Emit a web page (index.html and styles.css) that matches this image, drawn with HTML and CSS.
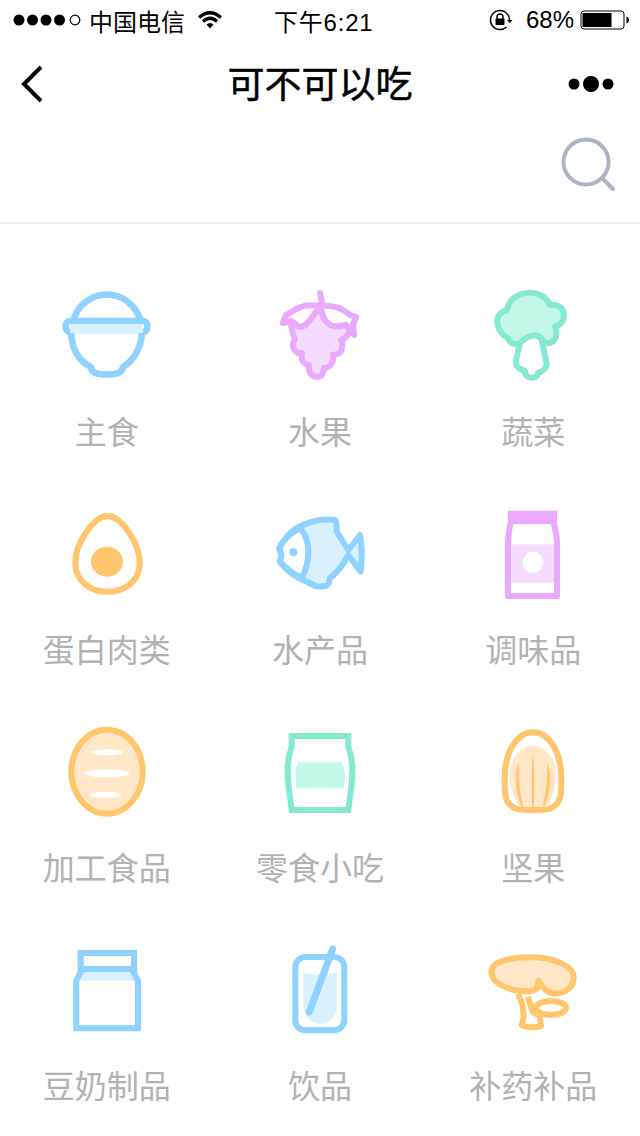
FILE: index.html
```html
<!DOCTYPE html>
<html lang="zh">
<head>
    <meta charset="UTF-8">
    <meta name="viewport" content="width=device-width, initial-scale=1.0">
    <title>可不可以吃</title>
    <link rel="stylesheet" href="styles.css">
</head>
<body>
    <div class="status-bar">
        <div class="status-left">
            <svg class="signal" width="70" height="14" viewBox="0 0 70 14">
                <circle cx="6" cy="7" r="5.5"/>
                <circle cx="19.5" cy="7" r="5.5"/>
                <circle cx="33" cy="7" r="5.5"/>
                <circle cx="46.500" cy="7" r="5.500"/>
                <circle class="signal-empty" cx="62" cy="7" r="4.800"/>
            </svg>
            <span class="carrier">中国电信</span>
            <svg class="wifi" width="24" height="18" viewBox="0 0 24 18">
                <path d="M1 6.500Q12 -3 23 6.500" fill="none" stroke="#000" stroke-width="3.200"/>
                <path d="M5 10.500Q12 4 19 10.500" fill="none" stroke="#000" stroke-width="3.200"/>
                <path d="M8.500 13.500Q12 10.500 15.500 13.500L12 17.500Z"/>
            </svg>
        </div>
        <span class="time">下午6:21</span>
        <div class="status-right">
            <svg class="lock" width="24" height="22" viewBox="0 0 24 22">
                <path d="M20.500 11A9.500 9.500 0 1 0 17.500 18" fill="none" stroke="#000" stroke-width="1.500"/>
                <path d="M18 11H23.500L20.800 14Z"/>
                <path d="M8 10V8A3 3 0 0 1 14 8V10" fill="none" stroke="#000" stroke-width="1.500"/>
                <rect x="6.500" y="9.500" width="9" height="6.500" rx="1"/>
            </svg>
            <span class="battery-text">68%</span>
            <svg class="battery" width="50" height="20" viewBox="0 0 50 20">
                <rect x="1" y="1" width="43" height="18" rx="3" fill="none" stroke="#000" stroke-width="1"/>
                <rect x="2.500" y="3" width="29" height="14"/>
                <path d="M46.500 6.500C48.500 7 49 8.500 49 10C49 11.500 48.500 13 46.500 13.500Z"/>
            </svg>
        </div>
    </div>

    <div class="nav-bar">
        <svg class="back" width="28" height="40" viewBox="0 0 28 40">
            <path d="M22 3L5 20L22 37" fill="none" stroke="#000" stroke-width="4"/>
        </svg>
        <h1 class="title">可不可以吃</h1>
        <svg class="more" width="48" height="18" viewBox="0 0 48 18">
            <circle cx="6" cy="9" r="5.500"/>
            <circle cx="23" cy="9" r="8"/>
            <circle cx="40" cy="9" r="5.500"/>
        </svg>
    </div>

    <div class="search-row">
        <svg width="58" height="58" viewBox="0 0 58 58">
            <circle cx="26" cy="26" r="22.500" fill="none" stroke="#adb5c4" stroke-width="4"/>
            <path d="M42 42L53 53" fill="none" stroke="#adb5c4" stroke-width="4" stroke-linecap="round"/>
        </svg>
    </div>

    <div class="grid">
        <div class="item">
            <svg class="icon blue thick" viewBox="0 0 100 100">
                <rect class="tint" x="12" y="42" width="74" height="9" stroke="none"/>
                <path class="open" d="M16 38C21 21 35 11.500 50 11.500C65 11.500 78 21 84 38"/>
                <path class="open" d="M13 38H86C92 38 92 49 86 49M13 38C7 38 7 49 13 49"/>
                <path class="open" d="M14 50C15 66 22 78 34 84C34 90 40 91.500 50 91.500C60 91.500 65 90 66 84C76 78 84 66 85 50"/>
            </svg>
            <span class="label">主食</span>
        </div>
        <div class="item">
            <svg class="icon purple" viewBox="0 0 100 100">
                <path class="tint" d="M21 42Q22 50 25 56Q21 63 25 68Q29 71 32 70Q30 78 36 81L39 82Q38 92 46 94Q53 95 54 85Q60 85 62 80Q64 76 63 72Q72 71 72 64Q73 60 71 57Q78 55 80 46L50 22Z"/>
                <path class="white" d="M50 23C40 21 30 22 20 30L16 32L13 40L21 38C24 38 26 43 29 44C36 44 40 38 50 23Z"/>
                <path class="white" d="M50 23C60 22 72 24 80 32L86 34L83 42L84 52L76 42C70 43 63 45 59 41C54 38 52 32 50 23Z"/>
                <path class="open" d="M50 10L52.500 22" stroke-linecap="round"/>
            </svg>
            <span class="label">水果</span>
        </div>
        <div class="item">
            <svg class="icon green" viewBox="0 0 100 100">
                <path class="white" d="M36.700 60L33 78C32 84 37 86 41.700 88C41.700 96 55 97 55 90C65 86 63.800 80 63.200 78.700L58.300 55"/>
                <path class="tint" d="M25 55.300C12 48 9.700 30.300 24 27C27 6 60 4 67 22C83.700 19 85.300 40.300 72 43.700C77.700 58.700 63.300 65.300 58.300 55.300C53.300 50.300 45 52 36.700 60.300C31.700 62 26.700 60.300 25 55.300Z"/>
            </svg>
            <span class="label">蔬菜</span>
        </div>

        <div class="item">
            <svg class="icon orange" viewBox="0 0 100 100">
                <path class="white" d="M50.700 15C64 15 82.700 42 82.700 62C82.700 80 68 90.700 50.700 90.700C33 90.700 18.300 80 18.300 62C18.300 42 37 15 50.700 15Z"/>
                <ellipse class="solid" cx="50" cy="60.700" rx="16" ry="15"/>
            </svg>
            <span class="label">蛋白肉类</span>
        </div>
        <div class="item">
            <svg class="icon blue" viewBox="0 0 100 100">
                <path class="tint" d="M9.300 47.300C15 36 24 27 33.300 24C44 19 56 18 65 19C68 22 66 27 66.700 30.700L78.300 49L90 34C92 45 92 60 90.700 70.700L78.300 54C73 64 67 72 60 77C59 82 58 85 55 85C50 86 46 86 43.300 84L36.700 80.700C26 77 17 70 10 60.700L11.700 54Z"/>
                <path class="white" d="M9.300 47.300C14 38 22 31 30 27.300C36 34 38.300 41 38.300 49C38.300 60 36 70 31.700 77C24 73 16 68 10 60.700L11.700 54Z"/>
                <circle class="solid" cx="23.300" cy="51.300" r="4" stroke="none"/>
            </svg>
            <span class="label">水产品</span>
        </div>
        <div class="item">
            <svg class="icon purple" viewBox="0 0 100 100">
                <rect class="tint" x="25" y="43.300" width="49" height="38.400" stroke="none"/>
                <path class="open" d="M27.300 22.300C26 30 25 36 25 42V95H74V42C74 36 73 30 70.700 22.300"/>
                <rect class="solid" x="25" y="9.700" width="49" height="13.500" stroke="none"/>
                <circle cx="50" cy="61.300" r="10.500" fill="#fff" stroke="none"/>
            </svg>
            <span class="label">调味品</span>
        </div>

        <div class="item">
            <svg class="icon orange" viewBox="0 0 100 100">
                <ellipse class="tint" cx="50" cy="52.700" rx="35.700" ry="42"/>
                <ellipse cx="50" cy="33.300" rx="16" ry="3" fill="#fff" stroke="none"/>
                <ellipse cx="50" cy="54.300" rx="22.500" ry="4" fill="#fff" stroke="none"/>
                <ellipse cx="48.300" cy="75.700" rx="16" ry="3" fill="#fff" stroke="none"/>
            </svg>
            <span class="label">加工食品</span>
        </div>
        <div class="item">
            <svg class="icon green" viewBox="0 0 100 100">
                <path class="white miter" d="M21.700 17H78.300V27.700C81 35 82.300 43 82.300 51C82.300 65 80 78 78.300 91H21.700C20 78 17.700 65 17.700 51C17.700 43 19 35 21.700 27.700Z"/>
                <path class="tint" stroke="none" d="M27.300 43.300H71.700C74 48 75 52 75 56C75 61 74.500 65 74 69.300H25.700V54.300C25.700 50 26.500 46 27.300 43.300Z"/>
            </svg>
            <span class="label">零食小吃</span>
        </div>
        <div class="item">
            <svg class="icon orange" viewBox="0 0 100 100">
                <path class="white" d="M50 13.300C33 13.300 21.700 35 21.700 58V70C21.700 85 30 91 42 91H58C70 91 78.300 85 78.300 70V58C78.300 35 67 13.300 50 13.300Z"/>
                <path class="tint" stroke="none" d="M50 26.700C37 26.700 26.700 40 26.700 56C26.700 68 30 80 37 88H63C70 80 72.700 68 72.700 56C72.700 40 63 26.700 50 26.700Z"/>
                <path class="solid" stroke="none" d="M50 34C51.500 50 51.500 70 50.800 88H49.200C48.500 70 48.500 50 50 34Z"/>
                <path class="solid" stroke="none" d="M36 42.700C31 56 32 72 38.500 88L40 87.500C36.500 72 35.500 56 36 42.700Z"/>
                <path class="solid" stroke="none" d="M64 42.700C69 56 68 72 61.500 88L60 87.500C63.500 72 64.500 56 64 42.700Z"/>
            </svg>
            <span class="label">坚果</span>
        </div>

        <div class="item">
            <svg class="icon blue" viewBox="0 0 100 100">
                <path class="tint" stroke="none" d="M26.700 33H73.300L78.300 43.700H22.300Z"/>
                <path class="open miter" d="M25 32.300L19.300 43.700V91.300H81V43.700L75 32.300"/>
                <rect class="open miter" x="23.700" y="16" width="53.300" height="16"/>
            </svg>
            <span class="label">豆奶制品</span>
        </div>
        <div class="item">
            <svg class="icon blue" viewBox="0 0 100 100">
                <path class="tint" stroke="none" d="M33.300 36Q50 40 67.300 35V67C67.300 80 58 87 50 87C42 87 33.300 80 33.300 67Z"/>
                <rect class="open" x="25.300" y="20" width="49" height="73.300" rx="10"/>
                <path class="open" d="M62.700 12L39.300 75" stroke-width="7" stroke-linecap="round"/>
            </svg>
            <span class="label">饮品</span>
        </div>
        <div class="item">
            <svg class="icon orange" viewBox="0 0 100 100">
                <ellipse class="white" cx="68" cy="71" rx="15" ry="7"/>
                <path class="white" d="M35 57C37 62 41 68 40 74.700C41 78 41 81 38.700 88C44 91 52 90.500 58 89C57 85 57 81 56.700 78C53 77 51 76 50 74.700C48 70 46 64 45 59.700"/>
                <path class="tint" d="M56 44C60 52 66 57 73 56.500C84 56 91 49 90.700 40C90 28 68 20 47 20.300C25 20.500 8 25 8.300 35C8.500 46 25 53 38 54C44 54.500 50 55 53 52C57 50 54 42 56 44Z"/>
            </svg>
            <span class="label">补药补品</span>
        </div>
    </div>
</body>
</html>
```

FILE: styles.css
```css
* {
    box-sizing: border-box;
}
body {
    margin: 0;
    width: 640px;
    height: 1136px;
    overflow: hidden;
    background-color: #fff;
    color: #000;
    font-family: "Liberation Sans", "Noto Sans CJK SC", sans-serif;
}
svg {
    display: block;
    flex-shrink: 0;
}

/* status bar */
.status-bar {
    display: flex;
    align-items: center;
    height: 40px;
    padding: 0 10px 0 13px;
    font-size: 24px;
}
.status-left {
    display: flex;
    align-items: center;
}
.signal-empty {
    fill: #fff;
    stroke: #000;
    stroke-width: 1.2;
}
.carrier {
    margin-left: 6px;
}
.wifi {
    margin-left: 13px;
}
.time {
    margin-left: 52px;
    letter-spacing: 0.8px;
}
.status-right {
    display: flex;
    align-items: center;
    margin-left: auto;
}
.battery-text {
    margin-left: 13px;
}
.battery {
    margin-left: 6px;
}

/* nav */
.nav-bar {
    display: flex;
    align-items: center;
    height: 88px;
    padding: 0 24px 0 19px;
}
.back {
    margin-right: 25px;
}
.title {
    flex: 1;
    margin: 4px 0 0;
    font-size: 37px;
    font-weight: 400;
    line-height: 88px;
    text-align: center;
    -webkit-text-stroke: 0.5px #000;
}
.search-row {
    display: flex;
    justify-content: flex-end;
    height: 96px;
    padding: 8px 22px 0 0;
    border-bottom: 2px solid #eee;
}

/* category grid */
.grid {
    display: grid;
    grid-template-columns: repeat(3, 1fr);
    grid-auto-rows: 170px;
    row-gap: 48px;
    padding-top: 59px;
}
.item {
    display: flex;
    flex-direction: column;
    align-items: center;
}
.icon {
    width: 100px;
    height: 100px;
    stroke-width: 6;
    stroke-linejoin: round;
}
.thick {
    stroke-width: 6.5;
}
.label {
    margin-top: 30px;
    font-size: 32px;
    line-height: 40px;
    color: #b2b2b2;
}

.open {
    fill: none;
}
.white {
    fill: #fff;
}
.miter {
    stroke-linejoin: miter;
}
.blue {
    stroke: #8fd1ff;
}
.blue .tint {
    fill: #d9f0ff;
}
.blue .solid {
    fill: #8fd1ff;
}
.purple {
    stroke: #e8a9ff;
}
.purple .tint {
    fill: #f5dcff;
}
.purple .solid {
    fill: #e8a9ff;
}
.green {
    stroke: #85e8d0;
}
.green .tint {
    fill: #c5f7e9;
}
.orange {
    stroke: #ffc66e;
}
.orange .tint {
    fill: #ffe7c7;
}
.orange .solid {
    fill: #ffc66e;
    stroke: none;
}
```
